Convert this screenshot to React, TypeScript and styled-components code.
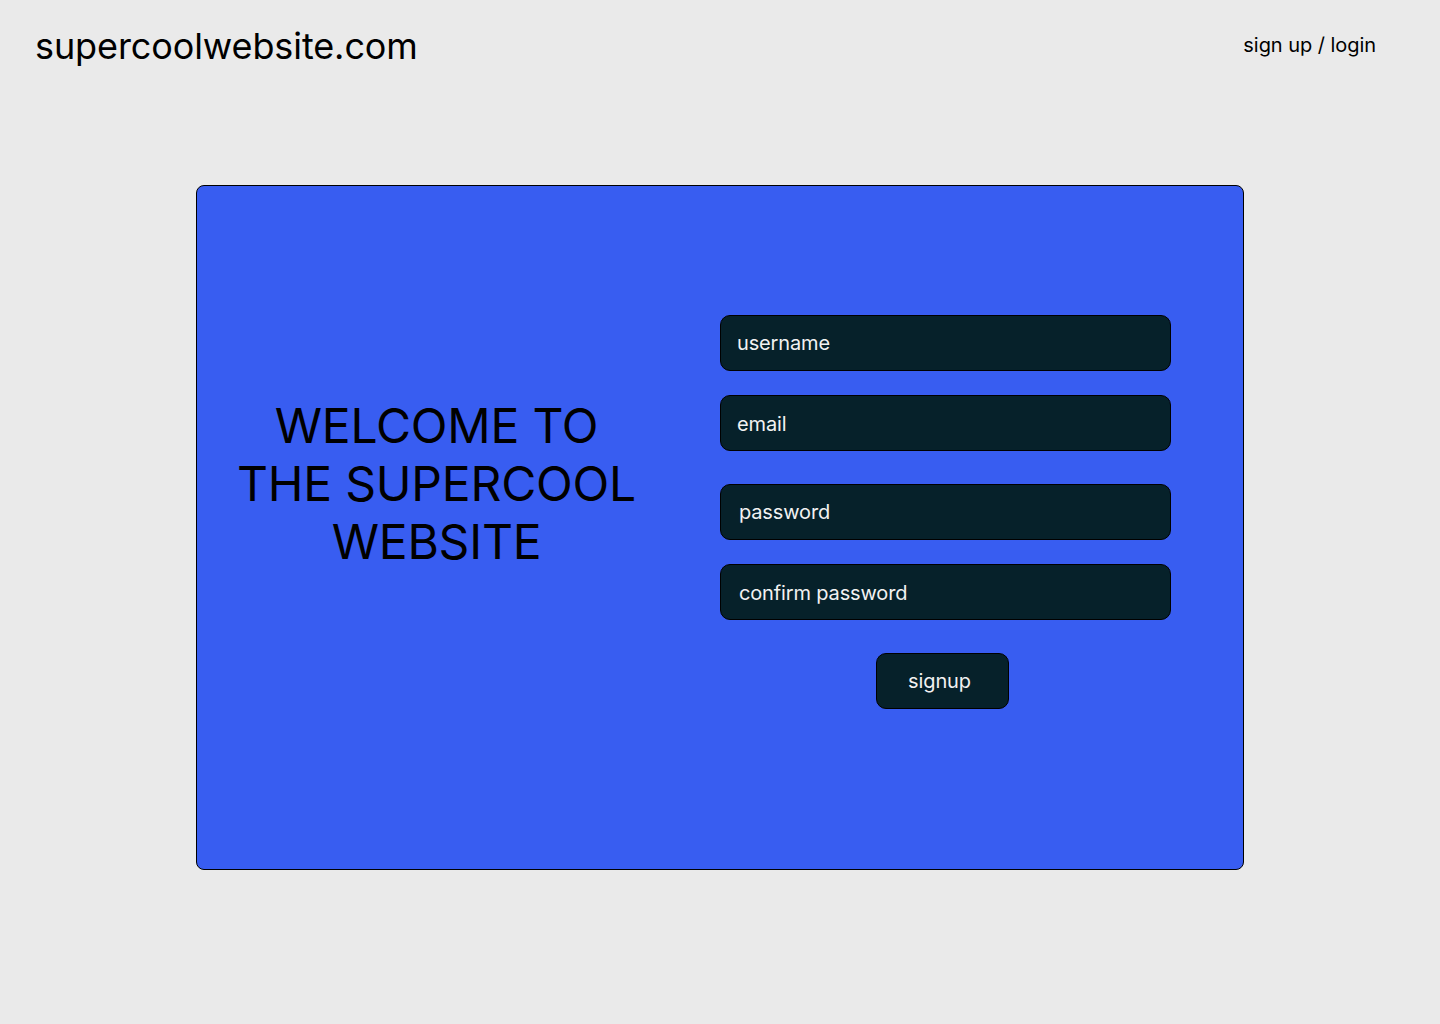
import React from "react";
import styled, { createGlobalStyle } from "styled-components";

const Global = createGlobalStyle`
  html, body { margin: 0; padding: 0; background: #eaeaea; }
  body { font-family: Inter, "Noto Sans", sans-serif; color: #000; }
  * { box-sizing: border-box; }
`;

const Page = styled.div`
  width: 1440px;
  min-height: 1024px;
  background: #eaeaea;
`;

const Header = styled.header`
  display: flex;
  justify-content: space-between;
  align-items: flex-start;
  padding: 24px 64px 0 35px;
  height: 185px;
`;

const Logo = styled.div`
  font-size: 36px;
  line-height: 44px;
  font-weight: 400;
  letter-spacing: -0.1px;
`;

const AuthLink = styled.a`
  font-size: 20px;
  line-height: 24px;
  margin-top: 9px;
  color: #000;
  text-decoration: none;
  letter-spacing: -0.05px;
`;

const Card = styled.main`
  width: 1048px;
  height: 685px;
  margin: 0 auto;
  background: #385df1;
  border: 1px solid #000;
  border-radius: 8px;
  display: grid;
  grid-template-columns: 479px 451px;
  column-gap: 44px;
  align-items: start;
  padding-top: 129px;
`;

const Heading = styled.h1`
  margin: 82px 0 0;
  font-size: 48px;
  line-height: 58px;
  font-weight: 400;
  letter-spacing: -0.2px;
  text-align: center;
  color: #000;
`;

const Form = styled.form`
  display: flex;
  flex-direction: column;
`;

const Field = styled.input<{ $gap: number; $pad: number; $shift?: number }>`
  height: 56px;
  width: 451px;
  margin-top: ${(p) => p.$gap}px;
  padding: ${(p) => p.$shift ?? 0}px 0 0 ${(p) => p.$pad}px;
  background: #06212a;
  border: 1px solid #000;
  border-radius: 10px;
  color: #f2f2f2;
  font-family: Inter, "Noto Sans", sans-serif;
  font-size: 20px;
  letter-spacing: -0.15px;
  outline: none;
  &::placeholder { color: #f2f2f2; opacity: 1; }
`;

const Submit = styled.button`
  align-self: flex-start;
  margin: 33px 0 0 156px;
  width: 133px;
  height: 56px;
  padding: 0 6px 0 0;
  background: #06212a;
  border: 1px solid #000;
  border-radius: 10px;
  color: #f2f2f2;
  font-family: Inter, "Noto Sans", sans-serif;
  font-size: 20px;
  letter-spacing: -0.1px;
  cursor: pointer;
`;

export default function App() {
  return (
    <Page>
      <Global />
      <Header>
        <Logo>supercoolwebsite.com</Logo>
        <AuthLink href="#">sign up / login</AuthLink>
      </Header>
      <Card>
        <Heading>
          WELCOME TO
          <br />
          THE SUPERCOOL
          <br />
          WEBSITE
        </Heading>
        <Form onSubmit={(e) => e.preventDefault()}>
          <Field $gap={0} $pad={16} placeholder="username" />
          <Field $gap={24} $pad={16} $shift={2} placeholder="email" />
          <Field $gap={33} $pad={18} placeholder="password" type="password" />
          <Field $gap={24} $pad={18} $shift={2} placeholder="confirm password" type="password" />
          <Submit type="submit">signup</Submit>
        </Form>
      </Card>
    </Page>
  );
}
